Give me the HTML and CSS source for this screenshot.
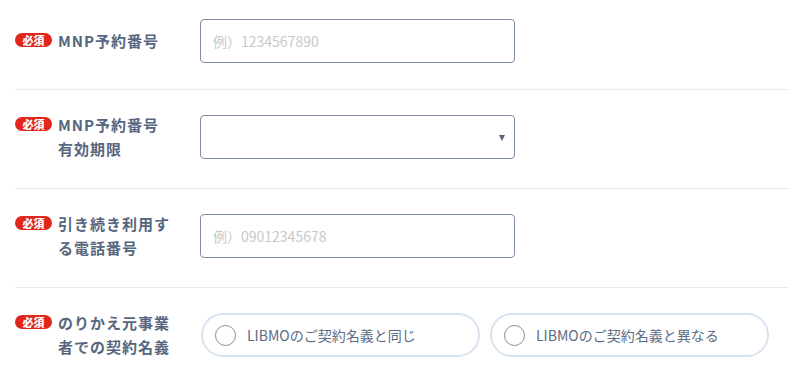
FILE: index.html
```html
<!DOCTYPE html>
<html lang="ja">
<head>
<meta charset="utf-8">
<link rel="stylesheet" href="styles.css">
</head>
<body>
<div class="form">
  <div class="row">
    <div class="head">
      <span class="badge">必須</span>
      <span class="label">MNP予約番号</span>
    </div>
    <div class="field">
      <input class="input" type="text" placeholder="例）1234567890">
    </div>
  </div>
  <div class="row">
    <div class="head">
      <span class="badge">必須</span>
      <span class="label">MNP予約番号<br>有効期限</span>
    </div>
    <div class="field">
      <div class="select"><span class="caret"></span></div>
    </div>
  </div>
  <div class="row">
    <div class="head">
      <span class="badge">必須</span>
      <span class="label">引き続き利用する電話番号</span>
    </div>
    <div class="field">
      <input class="input" type="text" placeholder="例）09012345678">
    </div>
  </div>
  <div class="row">
    <div class="head">
      <span class="badge">必須</span>
      <span class="label">のりかえ元事業者での契約名義</span>
    </div>
    <div class="field radios">
      <label class="pill"><span class="circle"></span><span class="pill-text">LIBMOのご契約名義と同じ</span></label>
      <label class="pill"><span class="circle"></span><span class="pill-text">LIBMOのご契約名義と異なる</span></label>
    </div>
  </div>
</div>
</body>
</html>
```
FILE: styles.css
```css
html, body {
  margin: 0;
  padding: 0;
  background: #ffffff;
}
body {
  font-family: "Noto Sans CJK JP", "Noto Sans", sans-serif;
  color: #56667e;
  width: 789px;
  height: 381px;
  overflow: hidden;
}
.form {
  padding-left: 15px;
  width: 800px;
}
.row {
  display: flex;
  align-items: center;
  padding: 23px 0 27px;
  border-bottom: 1px solid #e5ecf4;
}
.row:first-child {
  padding-top: 19px;
  padding-bottom: 26px;
}
.head {
  width: 185px;
  flex: none;
  display: flex;
  align-items: flex-start;
}
.badge {
  flex: none;
  width: 37px;
  height: 14px;
  margin-top: 4px;
  border-radius: 7px;
  background: #e1261c;
  color: #ffffff;
  font-size: 11px;
  font-weight: 900;
  line-height: 14px;
  text-align: center;
  letter-spacing: 0;
}
.label {
  margin-left: 6px;
  width: 120px;
  font-size: 15px;
  font-weight: 700;
  line-height: 24px;
  letter-spacing: 1px;
  color: #56667e;
}
.field {
  display: flex;
}
.input, .select {
  box-sizing: border-box;
  width: 315px;
  height: 44px;
  border: 1px solid #7f8da4;
  border-radius: 4px;
  background: #ffffff;
}
.input {
  padding: 0 12px;
  font-family: "Noto Sans CJK JP", "Noto Sans", sans-serif;
  font-size: 14px;
  color: #56667e;
  outline: none;
}
.input::placeholder {
  color: #c8c8c8;
}
.select {
  display: flex;
  align-items: center;
  justify-content: flex-end;
  padding-right: 9px;
}
.caret {
  width: 0;
  height: 0;
  border-left: 3.5px solid transparent;
  border-right: 3.5px solid transparent;
  border-top: 6px solid #56667e;
  margin-top: 2px;
}
.radios {
  gap: 10px;
  margin-left: 1px;
}
.pill {
  box-sizing: border-box;
  width: 279px;
  height: 44px;
  border: 2px solid #d8e3f1;
  border-radius: 22px;
  display: flex;
  align-items: center;
  padding-left: 12px;
}
.circle {
  box-sizing: border-box;
  width: 21px;
  height: 21px;
  border: 1px solid #7f8da4;
  border-radius: 50%;
  flex: none;
}
.pill-text {
  margin-left: 11px;
  font-size: 14px;
  color: #5c6c84;
}
```
